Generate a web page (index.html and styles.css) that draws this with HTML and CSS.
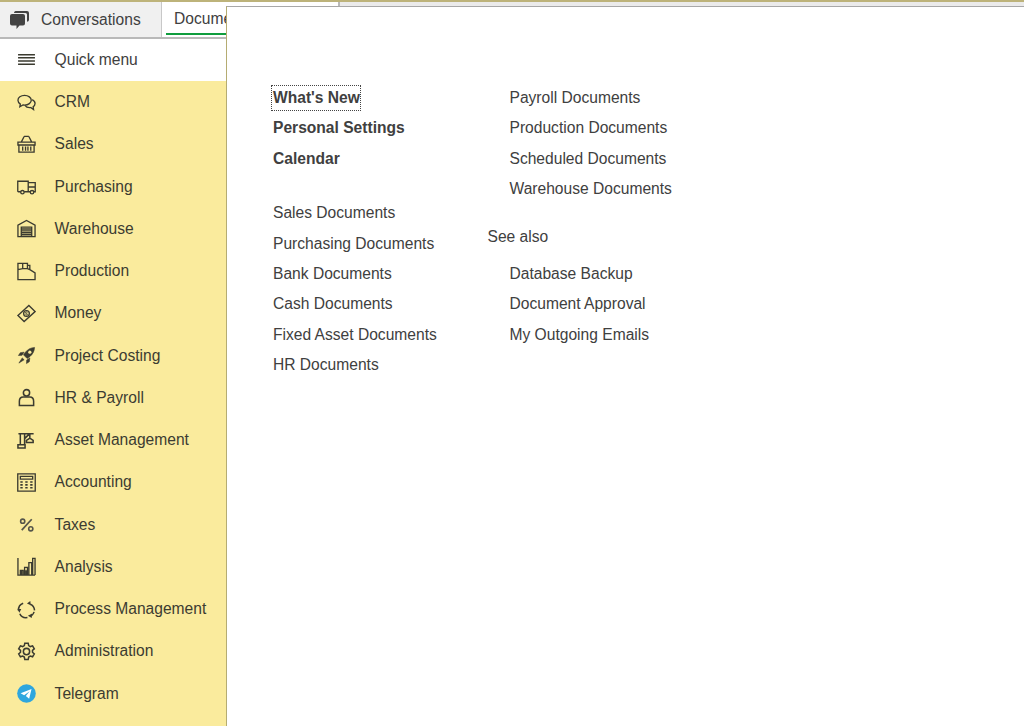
FILE: index.html
```html
<!DOCTYPE html>
<html lang="en">
<head>
<meta charset="utf-8">
<title>Documents</title>
<link rel="stylesheet" href="styles.css">
</head>
<body>
<div class="app">
  <div class="topline"></div>
  <div class="tabs">
    <div class="tab tab-inactive">
      <svg class="tab-icon" viewBox="0 0 19 18"><path d="M5.500 0h11.500a2 2 0 0 1 2 2v7a2 2 0 0 1-2 1.800V3.500a1.500 1.500 0 0 0-1.500-1.500H4a2 2 0 0 1 1.500-2z" fill="#444"/><path d="M2 3h11a2 2 0 0 1 2 2v7.500a2 2 0 0 1-2 2H9.500L6.500 18v-3.500H2a2 2 0 0 1-2-2V5a2 2 0 0 1 2-2z" fill="#444"/></svg>
      <span>Conversations</span>
    </div>
    <div class="tab tab-active"><span class="tab-label">Documents</span></div>
    <div class="tab-rest"></div>
  </div>
  <div class="main">
    <nav class="sidebar">
      <div class="item item-quick"><svg class="ico" viewBox="0 0 18 18"><path d="M1 3.500h16M1 6.500h16M1 9.500h16M1 12.500h16" stroke-width="1.400"/></svg><span>Quick menu</span></div>
      <div class="item"><svg class="ico" viewBox="0 0 20 20"><path d="M8 2.500c-4 0-7 2.300-7 5.200 0 1.700 1 3.100 2.500 4L3 14.500l3.300-2c.6.100 1.100.2 1.700.2 4 0 7-2.300 7-5s-3-5.200-7-5.200z"/><path d="M16 7c2 1 3 2.400 3 4 0 1.400-.8 2.600-2 3.400l.4 3-3-2.100c-2.400.3-4.800-.5-6-2.300"/></svg><span>CRM</span></div>
      <div class="item"><svg class="ico" viewBox="0 0 20 20"><path d="M1 7.500h18v3H1zM2 10.500v7.500h16v-7.500M6 12v4.500M9 12v4.500M11.500 12v4.500M14.500 12v4.500M4.500 7.500l3-6M15.500 7.500l-3-6M7.500 1.500h5"/></svg><span>Sales</span></div>
      <div class="item"><svg class="ico" viewBox="0 0 20 20"><path d="M4 15.500H1.500a.7.7 0 0 1-.7-.7V4.500h11v11H7.500M11.800 15.500h2M11.800 6h7.400v9.500h-1.700M11.800 10.500h7.400"/><circle cx="5.700" cy="16" r="1.800"/><circle cx="15.800" cy="16" r="1.800"/></svg><span>Purchasing</span></div>
      <div class="item"><svg class="ico" viewBox="0 0 20 20"><path d="M1 18.500V6.500L10 1.500l9 5v12zM4.500 18.500V8.500h11v10M4.500 10.500h11"/><path d="M4.500 12.500h11M4.500 14.500h11M4.500 16.500h11" stroke-width="1.500"/></svg><span>Warehouse</span></div>
      <div class="item"><svg class="ico" viewBox="0 0 20 20"><path d="M1 18.500V1.500h10V3.500h2.500V8L19 11.500v7zM6 1.500V7M11 3.500V7M1 8l5-1h5l2.500 1"/></svg><span>Production</span></div>
      <div class="item"><svg class="ico" viewBox="0 0 20 20"><path d="M1 12l11.500-10.500 6.500 6.500L7.500 18.500z"/><circle cx="10" cy="10" r="3"/><path d="M11 8.800c-1-.8-2.300-.3-2 .8.200.7 2 .3 2 1.200 0 .9-1.300 1-2 .3" stroke-width="1"/></svg><span>Money</span></div>
      <div class="item"><svg class="ico ico-solid" viewBox="0 0 20 20"><path d="M18.500 1.500c-4 .3-7 1.800-9.500 4.800L6.800 9.300l3.900 3.900 3-2.200c3-2.500 4.500-5.500 4.800-9.500z"/><circle class="hole" cx="13.500" cy="6.500" r="1.700"/><path d="M7.500 6.500L3.500 7 1.500 10l3.800-.2zM13.500 12.500L13 16.500 10 18.500l.2-3.800zM5.500 12.500l-3.500 5.500 5.500-3.500z"/></svg><span>Project Costing</span></div>
      <div class="item"><svg class="ico ico-heavy" viewBox="0 0 20 20"><circle cx="10" cy="5" r="3.300"/><path d="M2.500 18.500v-4.500c0-2.500 1.500-4.500 4-4.500h7c2.500 0 4 2 4 4.500v4.500z"/></svg><span>HR &amp; Payroll</span></div>
      <div class="item"><svg class="ico ico-heavy" viewBox="0 0 20 20"><path d="M1.500 3h16M3.500 3v11M8 3v11M1 14.500h7.500v3.500H1zM8 8l5-5M13.500 3v4.500M10 12v-2l3.500-2.500 3.500 2.500v2z"/></svg><span>Asset Management</span></div>
      <div class="item"><svg class="ico" viewBox="0 0 20 20"><path d="M.8 1h18.400v18H.8zM3.500 3.500h13v3h-13z"/><path d="M3.500 9.500h2.500M8.700 9.500h2.500M13.900 9.500h2.500M3.500 12.500h2.500M8.700 12.500h2.500M13.900 12.500h2.500M3.500 15.500h2.500M8.700 15.500h2.500M13.900 15.500h2.500" stroke-width="1.700"/></svg><span>Accounting</span></div>
      <div class="item"><svg class="ico ico-soft" viewBox="0 0 20 20"><path d="M15.500 4.500L5 16" stroke-width="1.800"/><circle cx="6" cy="6.500" r="2.200" stroke-width="1.700"/><circle cx="14.500" cy="14.500" r="2.200" stroke-width="1.700"/></svg><span>Taxes</span></div>
      <div class="item"><svg class="ico" viewBox="0 0 20 20"><path d="M1 1v18h18M3.500 19v-5h3v5M8 19v-8h3v8M12.500 19V6h3v13M16.500 19V1.500h2.500V19"/><path d="M4 14.500h2v4.500H4zM8.500 14h2v5h-2z" class="dark"/></svg><span>Analysis</span></div>
      <div class="item"><svg class="ico ico-heavy" viewBox="0 0 20 20"><path d="M14 4.500c2.500 1 4.200 3.500 4.500 6.500M18 12.500c-.5 1.500-1.200 2.800-2.500 3.800M11 18.500c-3.500.5-6.800-1-8-4M1.500 11c0-3.500 2-6.500 5-7.500"/><path d="M10.500 3.800L14 1l.5 4.500zM11.500 16.500l4.500-2.300-.5 4.800zM.5 9.500h4l-2 4zM9.500 1.500H8" class="dark"/></svg><span>Process Management</span></div>
      <div class="item"><svg class="ico ico-heavy" viewBox="0 0 20 20"><path d="M8.200 1.300h3.600l.5 2.500 1.700 1 2.400-.8 1.800 3.100-1.900 1.700v2l1.900 1.700-1.800 3.100-2.400-.8-1.700 1-.5 2.500H8.200l-.5-2.500-1.700-1-2.400.8-1.800-3.100 1.900-1.700v-2L1.800 7.100l1.800-3.100 2.400.8 1.700-1z"/><circle cx="10" cy="10" r="3.300"/></svg><span>Administration</span></div>
      <div class="item"><svg class="ico ico-flat" viewBox="0 0 20 20"><circle cx="10" cy="10" r="9.800" fill="#2ea6de"/><path d="M3.800 9.800l11.500-4.600-2.500 10.400-3.500-3 4-5-5.800 4.200z" fill="#fff"/></svg><span>Telegram</span></div>
    </nav>
    <section class="panel">
      <div class="col col-left">
        <a class="link strong focused">What's New</a>
        <a class="link strong">Personal Settings</a>
        <a class="link strong">Calendar</a>
        <div class="group">
          <a class="link">Sales Documents</a>
          <a class="link">Purchasing Documents</a>
          <a class="link">Bank Documents</a>
          <a class="link">Cash Documents</a>
          <a class="link">Fixed Asset Documents</a>
          <a class="link">HR Documents</a>
        </div>
      </div>
      <div class="col col-right">
        <a class="link">Payroll Documents</a>
        <a class="link">Production Documents</a>
        <a class="link">Scheduled Documents</a>
        <a class="link">Warehouse Documents</a>
        <div class="see-also">See also</div>
        <a class="link">Database Backup</a>
        <a class="link">Document Approval</a>
        <a class="link">My Outgoing Emails</a>
      </div>
    </section>
  </div>
</div>
</body>
</html>
```
FILE: styles.css
```css
* { box-sizing: border-box; }
html, body { margin: 0; height: 100%; }
body { font-family: "Liberation Sans", Arial, sans-serif; font-size: 15.6px; color: #404040; background: #fff; overflow: hidden; }
.app { position: relative; width: 1024px; height: 726px; display: flex; flex-direction: column; overflow: hidden; }
.topline { height: 2px; background: #bdb37a; flex: none; }
.tabs { height: 37px; flex: none; display: flex; border-bottom: 2px solid #b9b9b9; }
.tab { display: flex; align-items: center; height: 35px; border-right: 1px solid #c8c8c8; }
.tab-inactive { width: 162px; background: #f0f0f0; padding-left: 10px; gap: 12px; }
.tab-icon { width: 19px; height: 18px; flex: none; }
.tab-active { flex: none; width: 178px; padding: 0 4px; background: #fff; align-items: flex-start; border-right: 2px solid #b9b9b9; }
.tab-label { display: block; width: 100%; padding: 2px 0 0 8px; line-height: 30px; height: 33px; border-bottom: 2px solid #0f9d3e; }
.tab-rest { flex: 1; height: 35px; background: #ebebeb; }
.main { flex: 1; display: flex; min-height: 0; }
.sidebar { width: 226px; flex: none; background: #faeb9d; }
.item { height: 42.25px; display: flex; align-items: center; padding-left: 17px; gap: 18.6px; color: #3c3c32; white-space: nowrap; }
.item-quick { background: #fff; height: 42px; color: #404040; }
.ico { width: 19px; height: 19px; flex: none; fill: none; stroke: #3b3b30; stroke-width: 1.4; }
.ico-solid { fill: #3b3b30; stroke-width: .6; }
.ico-solid .hole { fill: #faeb9d; stroke: none; }
.ico-heavy { stroke-width: 1.6; }
.ico-soft { stroke: #55554a; }
.ico-flat { stroke: none; }
.dark { fill: #3b3b30; stroke: none; }
.panel { position: absolute; left: 226px; top: 6px; width: 798px; height: 720px; background: #fff; border-top: 1px solid #a8a8a8; border-left: 1px solid #b5ac72; padding: 76px 0 0 46px; display: flex; }
.col { display: flex; flex-direction: column; }
.col-left { width: 214.5px; }
.col-right { padding-left: 22px; }
.link { display: block; height: 30.4px; line-height: 30.4px; white-space: nowrap; color: #404040; }
.strong { font-weight: 700; }
.focused { align-self: flex-start; position: relative; }
.focused::after { content: ""; position: absolute; left: -2px; right: -1px; top: 2px; bottom: 2px; border: 1px dotted #444; }
.group { margin-top: 24px; }
.see-also { margin: 17px 0 7px -22px; height: 30.4px; line-height: 30.4px; }
```
